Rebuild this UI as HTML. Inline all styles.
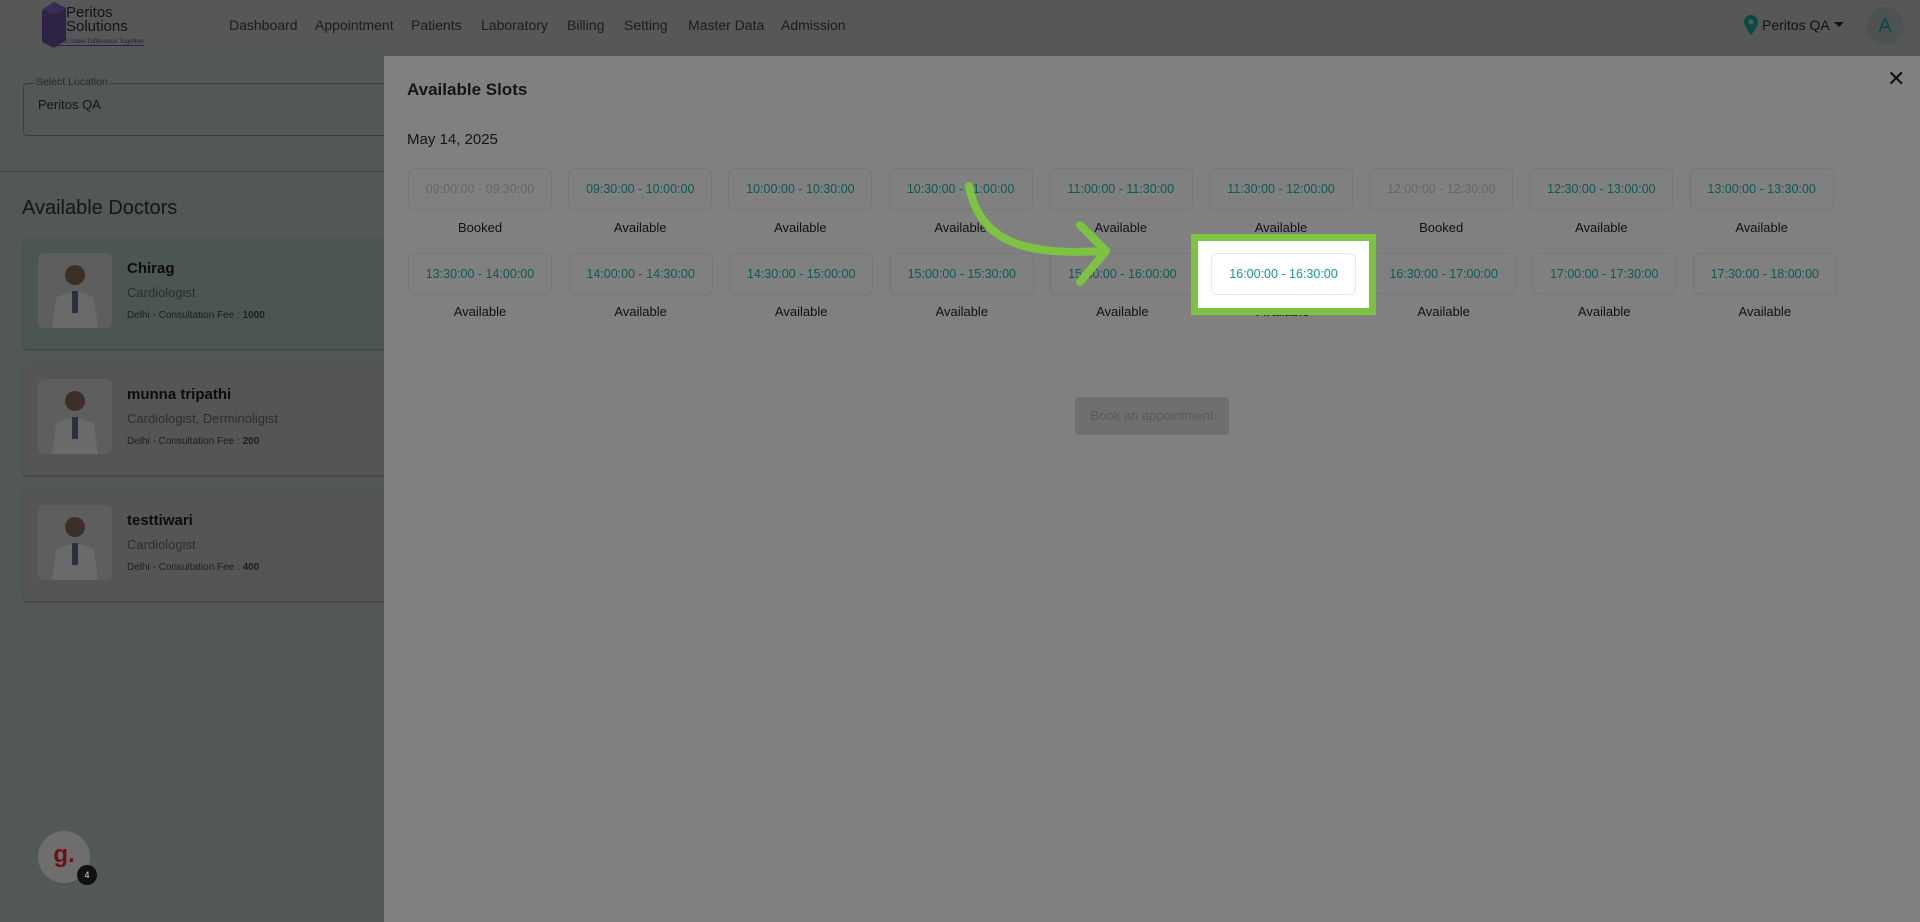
<!DOCTYPE html>
<html><head><meta charset="utf-8"><style>
*{box-sizing:border-box;margin:0;padding:0}
body{width:1920px;height:922px;overflow:hidden;font-family:"Liberation Sans",Arial,sans-serif;background:#535656;position:relative}
.hdr{position:absolute;left:0;top:0;width:1920px;height:51px;background:#575757}
.nav span{position:absolute;top:17px;font-size:14px;color:#1c1c1c}
.left{position:absolute;left:0;top:51px;width:384px;height:871px;background:#525757}
.fs{position:absolute;left:23px;top:83px;width:400px;height:53px;border:1px solid #3a3d3d;border-radius:4px}
.fs .lg{position:absolute;left:10px;top:-8px;font-size:10.5px;color:#2a2a2a;background:#525757;padding:0 2px}
.card{position:absolute;left:23px;width:380px;height:110px;background:#555;border-radius:4px;box-shadow:0 1px 2px rgba(0,0,0,.3)}
.card .img{position:absolute;left:15px;top:14px;width:74px;height:75px;border-radius:6px;background:#5e5e5e;overflow:hidden}
.card b{position:absolute;left:104px;top:21px;font-size:15px;color:#0c0c0c}
.card .sp{position:absolute;left:104px;top:46px;font-size:13px;color:#2d2d2d}
.card .fee{position:absolute;left:104px;top:71px;font-size:10px;color:#1e1e1e}
.dlg{position:absolute;left:384px;top:56px;width:1536px;height:866px;background:#808080}
.slot{position:absolute;width:144px;height:42px;border:1px solid #777;border-radius:6px;font-size:12.5px;color:#0b5a56;text-align:center;line-height:40px}
.slot.bk{color:#666}
.lab{position:absolute;width:144px;text-align:center;font-size:13px;color:#111}
</style></head><body>
<div class="hdr">
 <svg style="position:absolute;left:38px;top:2px" width="32" height="46"><polygon points="4,8 16,0 28,6 28,38 16,46 4,40" fill="#2e2245"/><polygon points="16,0 28,6 16,12 4,8" fill="#3a2c58"/></svg>
 <div style="position:absolute;left:66px;top:6px;font-size:15px;color:#141414;line-height:14px">Peritos<br>Solutions</div>
 <div style="position:absolute;left:56px;top:38px;font-size:6.5px;color:#2a2044;border-bottom:1px solid #2a2044">Lets make Difference Together</div>
 <div class="nav"><span style="left:229px">Dashboard</span><span style="left:315px">Appointment</span><span style="left:411px">Patients</span><span style="left:481px">Laboratory</span><span style="left:567px">Billing</span><span style="left:624px">Setting</span><span style="left:688px">Master Data</span><span style="left:781px">Admission</span></div>
 <svg style="position:absolute;left:1744px;top:15px" width="14" height="20"><path d="M7 0C3 0 0 3 0 7c0 5 7 13 7 13s7-8 7-13c0-4-3-7-7-7z" fill="#0a4a45"/><circle cx="7" cy="7" r="2.5" fill="#575757"/></svg>
 <div style="position:absolute;left:1762px;top:17px;font-size:14px;color:#111">Peritos QA</div>
 <div style="position:absolute;left:1834px;top:22px;border-left:5px solid transparent;border-right:5px solid transparent;border-top:5px solid #111"></div>
 <div style="position:absolute;left:1866px;top:7px;width:38px;height:38px;border-radius:50%;background:#4d5353;color:#0f4744;font-size:20px;text-align:center;line-height:38px">A</div>
</div>
<div class="left">
 <div class="fs" style="top:32px"><span class="lg">Select Location</span><div style="position:absolute;left:14px;top:13px;font-size:13px;color:#151515">Peritos QA</div></div>
 <div style="position:absolute;left:0;top:120px;width:384px;height:1px;background:#444"></div>
 <div style="position:absolute;left:22px;top:146px;font-size:20px;color:#151515">Available Doctors</div>
</div>
<div class="card" style="top:239px;background:#4b5553"><div class="img"><svg width="74" height="75"><path d="M14 75 L18 45 Q37 33 56 45 L60 75Z" fill="#6a6a6a"/><circle cx="37" cy="22" r="10" fill="#3d2e28"/><rect x="34" y="38" width="6" height="22" fill="#2a3040"/></svg></div><b>Chirag</b><div class="sp">Cardiologist</div><div class="fee">Delhi - Consultation Fee : <strong>1000</strong></div></div>
<div class="card" style="top:365px"><div class="img"><svg width="74" height="75"><path d="M14 75 L18 45 Q37 33 56 45 L60 75Z" fill="#6a6a6a"/><circle cx="37" cy="22" r="10" fill="#3d2e28"/><rect x="34" y="38" width="6" height="22" fill="#2a3040"/></svg></div><b>munna tripathi</b><div class="sp">Cardiologist, Derminoligist</div><div class="fee">Delhi - Consultation Fee : <strong>200</strong></div></div>
<div class="card" style="top:491px"><div class="img"><svg width="74" height="75"><path d="M14 75 L18 45 Q37 33 56 45 L60 75Z" fill="#6a6a6a"/><circle cx="37" cy="22" r="10" fill="#3d2e28"/><rect x="34" y="38" width="6" height="22" fill="#2a3040"/></svg></div><b>testtiwari</b><div class="sp">Cardiologist</div><div class="fee">Delhi - Consultation Fee : <strong>400</strong></div></div>
<div style="position:absolute;left:38px;top:831px;width:52px;height:52px;border-radius:50%;background:#6e6e6e;color:#6e0f12;font-size:24px;font-weight:bold;text-align:center;line-height:48px">g.</div>
<div style="position:absolute;left:77px;top:865px;width:20px;height:20px;border-radius:50%;background:#111;color:#ddd;font-size:9px;text-align:center;line-height:20px">4</div>

<div class="dlg">
 <div style="position:absolute;left:23px;top:24px;font-size:17px;font-weight:bold;color:#151515">Available Slots</div>
 <div style="position:absolute;left:1503px;top:10px;font-size:22px;color:#111">✕</div>
 <div style="position:absolute;left:23px;top:75px;font-size:15px;color:#151515">May 14, 2025</div>
</div>
<div id="slots"></div>
<script>
var r1=["09:00:00 - 09:30:00","09:30:00 - 10:00:00","10:00:00 - 10:30:00","10:30:00 - 11:00:00","11:00:00 - 11:30:00","11:30:00 - 12:00:00","12:00:00 - 12:30:00","12:30:00 - 13:00:00","13:00:00 - 13:30:00"];
var l1=["Booked","Available","Available","Available","Available","Available","Booked","Available","Available"];
var r2=["13:30:00 - 14:00:00","14:00:00 - 14:30:00","14:30:00 - 15:00:00","15:00:00 - 15:30:00","15:30:00 - 16:00:00","16:00:00 - 16:30:00","16:30:00 - 17:00:00","17:00:00 - 17:30:00","17:30:00 - 18:00:00"];
var h="";
for(var i=0;i<9;i++){var x=408+i*160.2;
h+='<div class="slot'+(l1[i]=="Booked"?" bk":"")+'" style="left:'+x+'px;top:168px">'+r1[i]+'</div><div class="lab" style="left:'+x+'px;top:220px">'+l1[i]+'</div>';
var x2=408+i*160.6;
h+='<div class="slot" style="left:'+x2+'px;top:253px">'+r2[i]+'</div><div class="lab" style="left:'+x2+'px;top:304px">Available</div>';}
document.getElementById('slots').innerHTML=h;
</script>
<div style="position:absolute;left:1191px;top:234px;width:185px;height:81px;background:#7ec241"></div>
<div style="position:absolute;left:1198px;top:241px;width:171px;height:67px;background:#fff"></div>
<div style="position:absolute;left:1211px;top:253px;width:145px;height:42px;border:1px solid #e6e6e6;border-radius:6px;background:#fff;font-size:12.5px;color:#139a92;text-align:center;line-height:40px">16:00:00 - 16:30:00</div>
<svg style="position:absolute;left:0;top:0" width="1920" height="922"><path d="M969 186 C980 240 1020 256 1104 251" fill="none" stroke="#7ec241" stroke-width="8" stroke-linecap="round"/><path d="M1080 225 L1106 251 L1080 282" fill="none" stroke="#7ec241" stroke-width="8" stroke-linecap="round" stroke-linejoin="round"/></svg>
<div style="position:absolute;left:1075px;top:397px;width:154px;height:38px;background:#6f6f6f;border-radius:3px;color:#5a5a5a;font-size:13px;text-align:center;line-height:38px">Book an appointment</div>
</body></html>
